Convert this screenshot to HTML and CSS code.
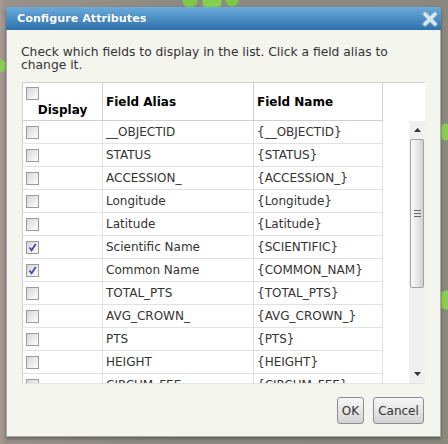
FILE: index.html
```html
<!DOCTYPE html>
<html>
<head>
<meta charset="utf-8">
<link rel="stylesheet" href="styles.css">
</head>
<body>
<div class="dialog">
  <div class="titlebar">
    <span class="title">Configure Attributes</span>
    <svg class="close" width="16" height="16" viewBox="0 0 16 16">
      <path d="M3 3 L13 13 M13 3 L3 13" stroke="#7fa9bf" stroke-width="5.2" stroke-linecap="round"/>
      <path d="M3 3 L13 13 M13 3 L3 13" stroke="#d6e8ee" stroke-width="3.4" stroke-linecap="round"/>
    </svg>
  </div>
  <div class="panel">
    <p class="intro">Check which fields to display in the list. Click a field alias to change it.</p>
    <div class="list">
      <div class="grid">
        <div class="row head">
          <div class="cell c-disp"><span class="cb"></span><span class="disp-label">Display</span></div>
          <div class="cell c-alias">Field Alias</div>
          <div class="cell c-name">Field Name</div>
        </div>
        <div class="row"><div class="cell c-disp"><span class="cb"></span></div><div class="cell c-alias">__OBJECTID</div><div class="cell c-name">{__OBJECTID}</div></div>
        <div class="row"><div class="cell c-disp"><span class="cb"></span></div><div class="cell c-alias">STATUS</div><div class="cell c-name">{STATUS}</div></div>
        <div class="row"><div class="cell c-disp"><span class="cb"></span></div><div class="cell c-alias">ACCESSION_</div><div class="cell c-name">{ACCESSION_}</div></div>
        <div class="row"><div class="cell c-disp"><span class="cb"></span></div><div class="cell c-alias">Longitude</div><div class="cell c-name">{Longitude}</div></div>
        <div class="row"><div class="cell c-disp"><span class="cb"></span></div><div class="cell c-alias">Latitude</div><div class="cell c-name">{Latitude}</div></div>
        <div class="row"><div class="cell c-disp"><span class="cb checked"><svg width="11" height="11" viewBox="0 0 11 11"><path d="M2.5 5.5 L4.6 8.2 L8.8 2" fill="none" stroke="#3b46a0" stroke-width="1.7"/></svg></span></div><div class="cell c-alias">Scientific Name</div><div class="cell c-name">{SCIENTIFIC}</div></div>
        <div class="row"><div class="cell c-disp"><span class="cb checked"><svg width="11" height="11" viewBox="0 0 11 11"><path d="M2.5 5.5 L4.6 8.2 L8.8 2" fill="none" stroke="#3b46a0" stroke-width="1.7"/></svg></span></div><div class="cell c-alias">Common Name</div><div class="cell c-name">{COMMON_NAM}</div></div>
        <div class="row"><div class="cell c-disp"><span class="cb"></span></div><div class="cell c-alias">TOTAL_PTS</div><div class="cell c-name">{TOTAL_PTS}</div></div>
        <div class="row"><div class="cell c-disp"><span class="cb"></span></div><div class="cell c-alias">AVG_CROWN_</div><div class="cell c-name">{AVG_CROWN_}</div></div>
        <div class="row"><div class="cell c-disp"><span class="cb"></span></div><div class="cell c-alias">PTS</div><div class="cell c-name">{PTS}</div></div>
        <div class="row"><div class="cell c-disp"><span class="cb"></span></div><div class="cell c-alias">HEIGHT</div><div class="cell c-name">{HEIGHT}</div></div>
        <div class="row"><div class="cell c-disp"><span class="cb"></span></div><div class="cell c-alias">CIRCUM_FEE</div><div class="cell c-name">{CIRCUM_FEE}</div></div>
      </div>
      <div class="spacer"></div>
      <div class="scrollbar">
        <div class="sb-btn"><svg width="7" height="4" viewBox="0 0 7 4"><path d="M0 4 L3.5 0 L7 4 Z" fill="#333"/></svg></div>
        <div class="sb-thumb"><span class="grip"></span></div>
        <div class="sb-track"></div>
        <div class="sb-btn"><svg width="7" height="4" viewBox="0 0 7 4"><path d="M0 0 L3.5 4 L7 0 Z" fill="#333"/></svg></div>
      </div>
    </div>
    <div class="buttons">
      <button class="btn ok">OK</button>
      <button class="btn cancel">Cancel</button>
    </div>
  </div>
</div>
</body>
</html>
```
FILE: styles.css
```css
html, body {
  margin: 0;
  padding: 0;
}
body {
  width: 448px;
  height: 444px;
  overflow: hidden;
  font-family: "DejaVu Sans", Verdana, sans-serif;
  background:
    radial-gradient(circle at 190px 0px, #7cc94a 0 7px, transparent 8px),
    radial-gradient(circle at 212px 2px, #86cf4e 0 9px, transparent 10px),
    radial-gradient(circle at 232px 0px, #7cc94a 0 6px, transparent 7px),
    radial-gradient(circle at 447px 132px, #8ccc55 0 8px, transparent 9px),
    radial-gradient(circle at 447px 300px, #8ccc55 0 9px, transparent 10px),
    radial-gradient(circle at 0px 66px, #8ccc55 0 6px, transparent 7px),
    linear-gradient(90deg, #a89890 0, #9a928a 6px, #8c8a82 40%, #8a887e 100%);
}
.dialog {
  margin: 7px 0 0 6px;
  width: 435px;
  height: 430px;
  display: flex;
  flex-direction: column;
  box-shadow: 0 2px 3px rgba(40, 40, 40, 0.45);
}
.titlebar {
  height: 23px;
  flex: none;
  display: flex;
  align-items: center;
  justify-content: space-between;
  padding: 0 3px 0 11px;
  background: linear-gradient(#6cabda, #4b8fc6 50%, #2f70aa);
  border-radius: 2px 2px 0 0;
}
.title {
  color: #fff;
  font-weight: bold;
  font-size: 11.2px;
  letter-spacing: 0;
  text-shadow: 0 0 1px rgba(0, 40, 80, 0.4);
}
.close {
  display: block;
  margin-top: 1px;
}
.panel {
  flex: 1;
  background: #f5f5f0;
  border: 1px solid #a9a9a2;
  border-top: none;
  display: flex;
  flex-direction: column;
}
.intro {
  margin: 0;
  padding: 16px 14px 0 14px;
  font-size: 12.3px;
  line-height: 13px;
  color: #333;
}
.list {
  margin: 10px 0 0 15px;
  width: 403px;
  height: 302px;
  box-sizing: border-box;
  flex: none;
  background: #fff;
  border-top: 1px solid #cfcfcf;
  border-left: 1px solid #cfcfcf;
  border-bottom: 1px solid #e4e4e4;
  display: flex;
  overflow: hidden;
}
.grid {
  width: 360px;
  flex: none;
}
.row {
  display: grid;
  grid-template-columns: 80px 151px 129px;
  height: 23px;
  box-sizing: border-box;
  border-bottom: 1px solid #e2e2e2;
  font-size: 12px;
  color: #333;
}
.row.head {
  height: 38px;
  border-bottom: 1px solid #cfcfcf;
  color: #000;
  font-weight: bold;
}
.cell {
  border-right: 1px solid #e2e2e2;
  padding-left: 3px;
  display: flex;
  align-items: center;
  white-space: nowrap;
  overflow: hidden;
}
.head .cell {
  border-right-color: #cfcfcf;
}
.head .c-disp {
  flex-direction: column;
  align-items: stretch;
  justify-content: flex-start;
  padding-top: 4px;
}
.disp-label {
  display: block;
  text-align: center;
  margin-top: 3px;
  padding-right: 3px;
}
.cb {
  display: flex;
  align-items: center;
  justify-content: center;
  width: 13px;
  height: 13px;
  box-sizing: border-box;
  border: 1px solid #9a9a9a;
  background: linear-gradient(135deg, #d6d6d6, #f2f2f2 70%, #fcfcfc);
  flex: none;
}
.cb svg {
  display: block;
}
.spacer {
  flex: 1;
}
.scrollbar {
  width: 16px;
  flex: none;
  margin-top: 38px;
  display: flex;
  flex-direction: column;
  background: #f0f0f0;
}
.sb-btn {
  height: 18px;
  flex: none;
  display: flex;
  align-items: center;
  justify-content: center;
}
.sb-thumb {
  height: 149px;
  flex: none;
  margin: 0 1px;
  box-sizing: border-box;
  border: 1px solid #a2a2a2;
  border-radius: 2px;
  background: linear-gradient(90deg, #fbfbfb, #e4e4e4 60%, #cfcfcf);
  display: flex;
  align-items: center;
  justify-content: center;
}
.grip {
  width: 7px;
  height: 5px;
  border-top: 1px solid #666;
  border-bottom: 1px solid #666;
  background: linear-gradient(#666, #666) center / 7px 1px no-repeat;
}
.sb-track {
  flex: 1;
}
.buttons {
  display: flex;
  justify-content: flex-end;
  gap: 9px;
  margin-top: 13px;
  padding-right: 16px;
}
.btn {
  height: 27px;
  padding: 0;
  box-sizing: border-box;
  border: 1px solid #8e8e8e;
  border-radius: 3px;
  background: linear-gradient(#f6f6f6, #e6e6e6 50%, #d2d2d2);
  font-family: "DejaVu Sans", Verdana, sans-serif;
  font-size: 12px;
  color: #333;
}
.ok {
  width: 27px;
}
.cancel {
  width: 51px;
}
```
